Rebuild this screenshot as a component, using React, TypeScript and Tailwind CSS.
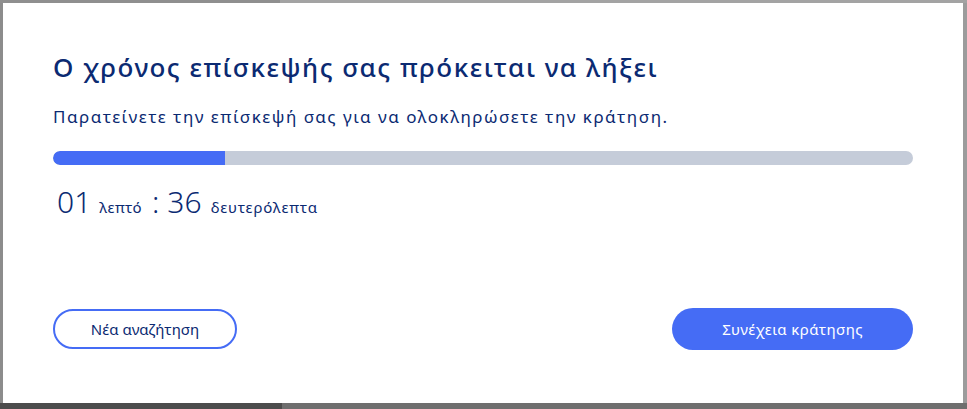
export default function App() {
  const font = { fontFamily: '"Noto Sans", "Open Sans", sans-serif' };
  return (
    <div className="w-[967px] h-[409px] bg-[#a3a3a3] flex flex-col overflow-hidden" style={font}>
      <div className="h-[3px] flex">
        <div className="w-[280px] bg-[#8f8f8f]" />
      </div>
      <div className="flex h-[400px]">
        <div className="w-[3px] bg-[#8c8c8c]" />
        <div className="w-[960px] h-[400px] bg-white flex flex-col px-[50px] pt-[44px] pb-[53px]">
          <h1 className="text-[26px] leading-[40px] text-[#0b2a72] font-medium tracking-[1.5px]">
            Ο χρόνος επίσκεψής σας πρόκειται να λήξει
          </h1>
          <p className="mt-[18px] text-[17px] leading-[24px] text-[#0b2a72] tracking-[1.5px]">
            Παρατείνετε την επίσκεψή σας για να ολοκληρώσετε την κράτηση.
          </p>
          <div className="mt-[22px] h-[14px] w-full rounded-full bg-[#c5ccd9] overflow-hidden">
            <div className="h-full bg-[#456cf5] rounded-l-full" style={{ width: '172px' }} />
          </div>
          <div className="mt-[19px] flex items-baseline text-[#0b2a72] pl-[4px]">
            <span className="text-[30px] leading-[36px] font-light">01</span>
            <span className="ml-[8px] text-[15px] tracking-[0.4px]">λεπτό</span>
            <span className="ml-[10px] text-[30px] leading-[36px] font-light">:</span>
            <span className="ml-[8px] text-[30px] leading-[36px] font-light">36</span>
            <span className="ml-[9px] text-[15px] tracking-[0.8px]">δευτερόλεπτα</span>
          </div>
          <div className="mt-auto flex items-center justify-between">
            <button className="w-[184px] h-[40px] rounded-full border-2 border-[#456cf5] text-[#0b2a72] text-[15px] bg-white">
              Νέα αναζήτηση
            </button>
            <button className="w-[241px] h-[42px] rounded-full bg-[#456cf5] text-white text-[15px] tracking-[0.4px]">
              Συνέχεια κράτησης
            </button>
          </div>
        </div>
        <div className="flex-1 bg-[#9c9c9c]" />
      </div>
      <div className="flex-1 flex">
        <div className="w-[282px] bg-[#4c4c4c]" />
        <div className="flex-1 bg-[#6e6e6e]" />
      </div>
    </div>
  );
}
